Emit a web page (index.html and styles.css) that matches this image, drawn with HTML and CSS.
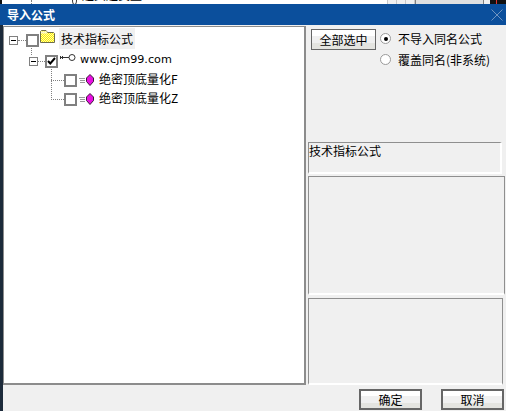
FILE: index.html
```html
<!DOCTYPE html>
<html lang="zh-CN">
<head>
<meta charset="UTF-8">
<title>导入公式</title>
<link rel="stylesheet" href="styles.css">
</head>
<body>

<!-- 后面窗口露出的一条 -->
<div class="behind">
    <span class="behind-edge"></span>
    <span class="behind-dots"></span>
    <span class="behind-mark"></span>
    <span class="behind-text">超买超卖型</span>
    <span class="behind-space"></span>
    <span class="behind-tabs"></span>
    <span class="behind-bar"></span>
    <span class="behind-end"></span>
    <span class="behind-dark"></span>
</div>

<div class="dialog">
    <div class="titlebar">
        <span>导入公式</span>
        <svg class="close" width="12" height="12" viewBox="0 0 12 12"><path d="M0.500 0.500L11.500 11.500M11.500 0.500L0.500 11.500" stroke="#6f93c0" stroke-width="1" fill="none"/></svg>
    </div>

    <div class="content">
        <!-- 左边的树 -->
        <div class="tree">
            <span class="vline line-a"></span>
            <span class="vline line-b"></span>

            <div class="row row-root">
                <span class="toggle"></span>
                <span class="dots"></span>
                <span class="check"></span>
                <svg class="folder" width="15" height="13" viewBox="0 0 15 13">
                    <defs>
                        <pattern id="dither" width="2" height="2" patternUnits="userSpaceOnUse">
                            <rect width="2" height="2" fill="#fff200"/>
                            <rect width="1" height="1" fill="#fdf9b0"/>
                            <rect x="1" y="1" width="1" height="1" fill="#fdf9b0"/>
                        </pattern>
                    </defs>
                    <path d="M0.500 12.500V1.500L1.500 0.500H6L7.500 2.500H13.500L14.500 3.500V12.500Z" fill="url(#dither)" stroke="#6e6e4a"/>
                    <path d="M1 1.500H7V3.500H1Z" fill="#fbf7c8"/>
                </svg>
                <span class="label selected">技术指标公式</span>
            </div>

            <div class="row row-site">
                <span class="toggle"></span>
                <span class="dots short"></span>
                <span class="check">
                    <svg width="9" height="8" viewBox="0 0 9 8"><path d="M1 4L3.300 6.500L8 1" stroke="#000" stroke-width="2" fill="none"/></svg>
                </span>
                <svg class="key" width="16" height="8" viewBox="0 0 16 8">
                    <path d="M0.500 2V5M2.500 2V5M0 3.500H9" stroke="#333" fill="none"/>
                    <circle cx="12" cy="3.500" r="3" fill="#fff" stroke="#333"/>
                </svg>
                <span class="label site">www.cjm99.com</span>
            </div>

            <div class="row row-leaf">
                <span class="dots long"></span>
                <span class="check"></span>
                <svg class="gem" width="16" height="12" viewBox="0 0 16 12">
                    <path d="M0 4.500H6M1 6.500H6M1 8.500H6" stroke="#999" fill="none"/>
                    <path d="M11 0.500L14.500 4V7.500L11 11.500L7.500 7.500V4Z" fill="#e810e0" stroke="#3a1a3a"/>
                </svg>
                <span class="label">绝密顶底量化F</span>
            </div>

            <div class="row row-leaf">
                <span class="dots long"></span>
                <span class="check"></span>
                <svg class="gem" width="16" height="12" viewBox="0 0 16 12">
                    <path d="M0 4.500H6M1 6.500H6M1 8.500H6" stroke="#999" fill="none"/>
                    <path d="M11 0.500L14.500 4V7.500L11 11.500L7.500 7.500V4Z" fill="#e810e0" stroke="#3a1a3a"/>
                </svg>
                <span class="label">绝密顶底量化Z</span>
            </div>
        </div>

        <!-- 右边 -->
        <div class="side">
            <div class="options">
                <button class="btn select-all">全部选中</button>
                <div class="radios">
                    <label class="radio-row"><span class="radio on"></span>不导入同名公式</label>
                    <label class="radio-row"><span class="radio"></span>覆盖同名(非系统)</label>
                </div>
            </div>
            <div class="panel panel-name">技术指标公式</div>
            <div class="panel panel-info"></div>
            <div class="panel panel-note"></div>
        </div>
    </div>

    <div class="footer">
        <button class="btn action">确定</button>
        <button class="btn action">取消</button>
    </div>
</div>

</body>
</html>
```

FILE: styles.css
```css
html, body {
    margin: 0;
    padding: 0;
}

body {
    width: 506px;
    height: 411px;
    overflow: hidden;
    background: #f0f0f0;
    font-family: "Noto Sans CJK SC", sans-serif;
    font-size: 12px;
    color: #000;
}

/* 后面的窗口 */
.behind {
    display: flex;
    height: 4px;
    overflow: hidden;
    background: #fff;
}
.behind-edge { width: 2px; background: #111; flex: none; }
.behind-dots {
    width: 2px;
    margin-left: 29px;
    border-left: 1px dotted #808080;
    flex: none;
}
.behind-mark {
    width: 3px;
    height: 8px;
    margin: -5px 0 0 38px;
    border: 1px solid #333;
    border-radius: 50%;
    flex: none;
}
.behind-text {
    margin: -13px 0 0 5px;
    line-height: 16px;
    height: 17px;
    white-space: nowrap;
    flex: none;
}
.behind-space { flex: 1; }
.behind-tabs {
    width: 28px;
    flex: none;
    background: repeating-linear-gradient(to right, #c8c8c8 0, #c8c8c8 1px, #f0f0f0 1px, #f0f0f0 9px);
}
.behind-bar { width: 67px; background: #e0e0e0; border-left: 1px solid #808080; flex: none; }
.behind-end { width: 7px; background: #f0f0f0; border-left: 1px solid #808080; box-sizing: border-box; flex: none; }
.behind-dark {
    width: 16px;
    flex: none;
    background: linear-gradient(to right, #111 0, #111 6px, #d33 6px, #d33 7px, #111 7px);
}

.dialog {
    height: 407px;
    display: flex;
    flex-direction: column;
    border-left: 3px solid #1c2a3a;
    box-sizing: border-box;
}

/* 标题栏 */
.titlebar {
    display: flex;
    align-items: center;
    justify-content: space-between;
    height: 21px;
    margin-left: -3px;
    padding: 0 3px 0 7px;
    background: #0b4f9c;
    color: #fff;
    font-weight: bold;
    font-size: 12px;
}

.content {
    display: flex;
    height: 359px;
    margin-top: 1px;
}

/* 树 */
.tree {
    position: relative;
    flex: none;
    width: 295px;
    height: 354px;
    padding: 2px 0 0 5px;
    background: #fff;
    border: 1px solid #8c8c8c;
    border-width: 1px 2px 2px 1px;
}

.row {
    display: flex;
    align-items: center;
    height: 20px;
}
.row-root { height: 22px; }
.row-site { margin-left: 20px; }
.row-leaf { margin-left: 42px; height: 19px; }

.toggle {
    position: relative;
    width: 7px;
    height: 7px;
    border: 1px solid #808080;
    background: #fff;
    flex: none;
}
.toggle::after {
    content: "";
    position: absolute;
    left: 1px;
    top: 3px;
    width: 5px;
    height: 1px;
    background: #000;
}

.dots {
    width: 8px;
    height: 0;
    border-top: 1px dotted #808080;
    flex: none;
}
.dots.short { width: 7px; }
.dots.long { width: 13px; }

.check {
    display: flex;
    align-items: center;
    justify-content: center;
    width: 9px;
    height: 9px;
    border: 2px solid #808080;
    background: #fff;
    flex: none;
}
.check svg { display: block; }

.folder { margin-left: 1px; margin-top: -8px; flex: none; }
.key { margin-left: 2px; margin-top: -7px; flex: none; }
.gem { margin-left: 2px; margin-top: -2px; flex: none; }

.label {
    margin: 0 0 4px 4px;
    white-space: nowrap;
}
.selected {
    background: #f0f0f0;
    padding: 2px;
}
.site {
    font-family: "DejaVu Sans", sans-serif;
    font-size: 11.200px;
}

.vline {
    position: absolute;
    width: 0;
    border-left: 1px dotted #808080;
}
.line-a { left: 27px; top: 19px; height: 9px; }
.line-b { left: 47px; top: 40px; height: 31px; }

/* 右边 */
.side {
    display: flex;
    flex-direction: column;
    width: 198px;
    margin-left: 2px;
    flex: none;
}

.options {
    display: flex;
    height: 116px;
    padding: 3px 0 0 3px;
    box-sizing: border-box;
    gap: 4px;
}

.btn {
    font-family: inherit;
    font-size: 12px;
    padding: 0;
    border: 2px solid #666;
    background: linear-gradient(to bottom, #fff 0, #fff 30%, #f0f0f0 30%, #f0f0f0 70%, #e4e4e0 70%);
    color: #000;
}
.select-all {
    width: 65px;
    height: 21px;
    border-width: 1px;
    flex: none;
}

.radios { margin-top: -1px; }
.radio-row {
    display: flex;
    align-items: center;
    height: 21px;
}

.radio {
    position: relative;
    width: 9px;
    height: 9px;
    border: 1px solid #9a9a9a;
    border-radius: 50%;
    background: #fff;
    margin-right: 7px;
    flex: none;
}
.radio.on::after {
    content: "";
    position: absolute;
    left: 2.500px;
    top: 2.500px;
    width: 4px;
    height: 4px;
    border-radius: 50%;
    background: #000;
}

.panel {
    box-sizing: border-box;
    border: 1px solid #8f8f8f;
    border-bottom: 2px solid #fff;
}
.panel-name {
    width: 194px;
    height: 32px;
    border-right: 2px solid #fff;
    line-height: 16px;
    white-space: nowrap;
}
.panel-info {
    width: 197px;
    height: 119px;
    margin-top: 2px;
}
.panel-note {
    width: 195px;
    height: 87px;
    margin-top: 3px;
}

.footer {
    display: flex;
    justify-content: flex-end;
    gap: 19px;
    padding: 4px 2px 0 0;
}
.action {
    width: 63px;
    height: 21px;
}
```
